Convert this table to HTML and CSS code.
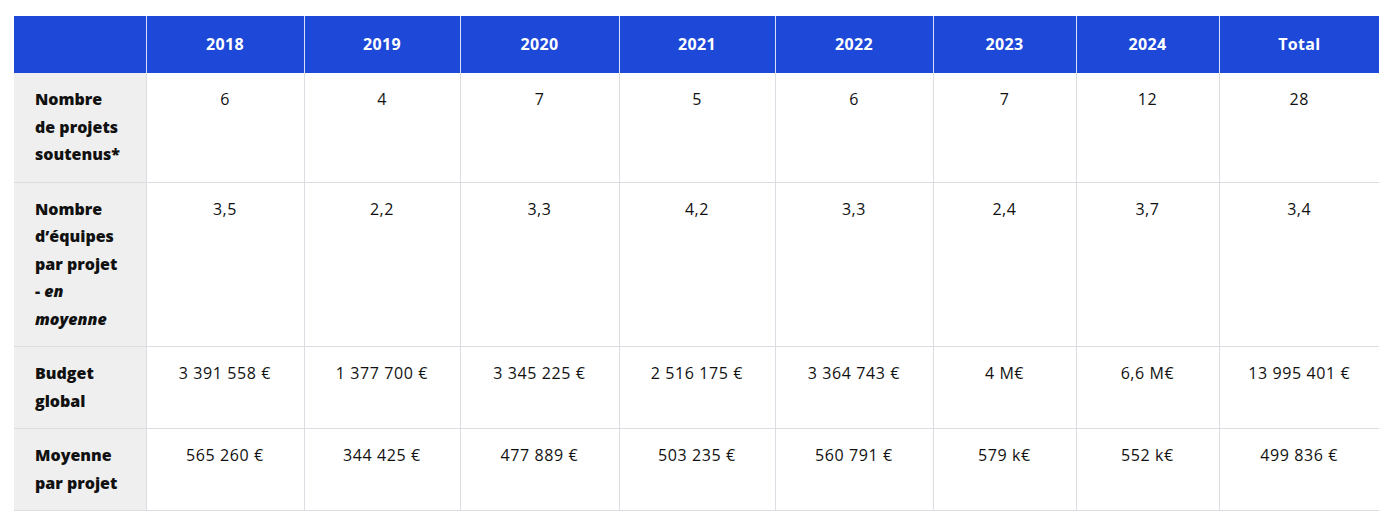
FILE: index.html
```html
<!DOCTYPE html>
<html lang="fr">
<head>
<meta charset="utf-8">
<title>Projets soutenus</title>
<link rel="stylesheet" href="styles.css">
</head>
<body>
<div class="wrap">
<table class="stats">
  <colgroup>
    <col class="c-label">
    <col class="c-158"><col class="c-156"><col class="c-159"><col class="c-156"><col class="c-158"><col class="c-143"><col class="c-143"><col class="c-160">
  </colgroup>
  <thead>
    <tr>
      <th></th><th>2018</th><th>2019</th><th>2020</th><th>2021</th><th>2022</th><th>2023</th><th>2024</th><th>Total</th>
    </tr>
  </thead>
  <tbody>
    <tr>
      <th class="label">Nombre<br>de projets<br>soutenus*</th>
      <td>6</td><td>4</td><td>7</td><td>5</td><td>6</td><td>7</td><td>12</td><td>28</td>
    </tr>
    <tr>
      <th class="label">Nombre<br>d’équipes<br>par projet<br>- <em>en<br>moyenne</em></th>
      <td>3,5</td><td>2,2</td><td>3,3</td><td>4,2</td><td>3,3</td><td>2,4</td><td>3,7</td><td>3,4</td>
    </tr>
    <tr>
      <th class="label">Budget<br>global</th>
      <td>3 391 558 €</td><td>1 377 700 €</td><td>3 345 225 €</td><td>2 516 175 €</td><td>3 364 743 €</td><td>4 M€</td><td>6,6 M€</td><td>13 995 401 €</td>
    </tr>
    <tr>
      <th class="label">Moyenne<br>par projet</th>
      <td>565 260 €</td><td>344 425 €</td><td>477 889 €</td><td>503 235 €</td><td>560 791 €</td><td>579 k€</td><td>552 k€</td><td>499 836 €</td>
    </tr>
  </tbody>
</table>
</div>
</body>
</html>
```

FILE: styles.css
```css
html, body {
  margin: 0;
  padding: 0;
  background: #ffffff;
}

body {
  font-family: "Open Sans", "Noto Sans", "Liberation Sans", sans-serif;
  color: #111111;
}

.wrap {
  padding: 16px 11px 0 14px;
}

.stats {
  width: 1365px;
  border-collapse: collapse;
  table-layout: fixed;
  font-size: 16px;
}

.c-label { width: 132px; }
.c-158 { width: 158px; }
.c-156 { width: 156px; }
.c-159 { width: 159px; }
.c-143 { width: 143px; }
.c-160 { width: 160px; }

.stats thead th {
  box-sizing: border-box;
  background: #1d48d8;
  color: #ffffff;
  font-weight: 700;
  font-size: 16px;
  line-height: 20px;
  letter-spacing: 0.3px;
  height: 57px;
  padding: 0 0 1px;
  text-align: center;
  vertical-align: middle;
  border-left: 1px solid #d9dff5;
}

.stats thead th:first-child {
  border-left: none;
}

.stats tbody td,
.stats tbody th {
  padding: 13px 8px;
  line-height: 27.5px;
  vertical-align: top;
  border-bottom: 1px solid #dcdde2;
  border-left: 1px solid #dcdde2;
}

.stats tbody td {
  text-align: center;
  font-weight: 400;
  letter-spacing: 0.6px;
}

.stats tbody th.label {
  background: #efefef;
  text-align: left;
  font-weight: 800;
  padding-left: 21px;
  padding-right: 4px;
  border-left: none;
  color: #111111;
}

.stats tbody th.label em {
  font-style: italic;
}
```
